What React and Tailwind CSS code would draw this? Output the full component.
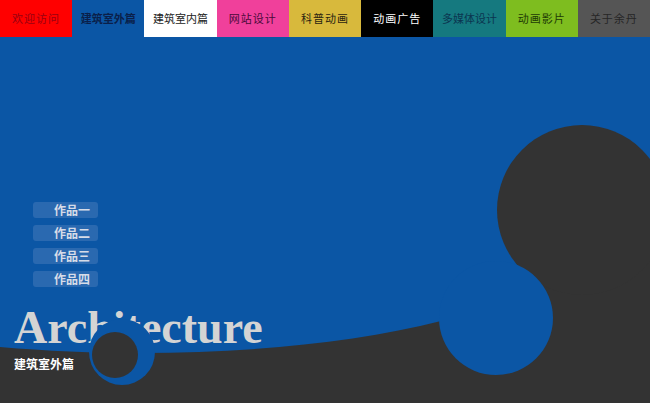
import React from 'react';

const navItems = [
  { label: '欢迎访问', className: 'bg-[#ff0000] text-[#9a0010] tracking-[1px]' },
  { label: '建筑室外篇', className: 'bg-[#0b56a5] text-[#0a1f4a] font-bold' },
  { label: '建筑室内篇', className: 'bg-white text-[#222222]' },
  { label: '网站设计', className: 'bg-[#f0409b] text-[#4a0a3a] tracking-[1px]' },
  { label: '科普动画', className: 'bg-[#d8b93c] text-[#2a2410] tracking-[1px]' },
  { label: '动画广告', className: 'bg-black text-white tracking-[1px]' },
  { label: '多媒体设计', className: 'bg-[#15797f] text-[#0b3550]' },
  { label: '动画影片', className: 'bg-[#7ebd1f] text-[#1d3a05] tracking-[1px]' },
  { label: '关于余丹', className: 'bg-[#555555] text-[#262626] tracking-[1px]' },
];

const works = ['作品一', '作品二', '作品三', '作品四'];

// backdrop: the grey blob on the right and the wave along the bottom
const Backdrop = () => (
  <svg className="absolute inset-0" width="650" height="366" viewBox="0 37 650 366">
    <path
      d="M0,347 C150,360 320,352 441,321 L496,318 L582,210 L650,210 L650,403 L0,403 Z"
      fill="#333333"
    />
    <circle cx="582" cy="210" r="85" fill="#333333" />
    <circle cx="496" cy="318" r="57" fill="#0b56a5" />
  </svg>
);

// small ring sitting on top of the title
const Ring = () => (
  <svg className="absolute left-[89px] top-[282px]" width="66" height="66" viewBox="89 319 66 66">
    <circle cx="122" cy="352" r="33" fill="#0b56a5" />
    <circle cx="115" cy="355" r="23" fill="#333333" />
  </svg>
);

export default function App() {
  return (
    <div className="w-[650px] h-[403px] overflow-hidden bg-[#0b56a5] font-['Noto_Sans_CJK_SC',sans-serif]">
      <nav className="grid grid-cols-9 h-[37px] relative z-10">
        {navItems.map((item) => (
          <div key={item.label} className={`flex items-center justify-center text-[11px] ${item.className}`}>
            {item.label}
          </div>
        ))}
      </nav>

      <main className="relative h-[366px]">
        <Backdrop />

        <div className="relative flex flex-col">
          <ul className="flex flex-col gap-[7px] pl-[33px] pt-[165px]">
            {works.map((w) => (
              <li
                key={w}
                className="w-[65px] h-4 rounded-[3px] bg-[#2a69b0] pl-[21px] flex items-center text-[12px] font-bold leading-none text-[#d6dce8]"
              >
                {w}
              </li>
            ))}
          </ul>

          <h1 className="mt-[18px] pl-[14px] font-['Liberation_Serif',serif] font-bold text-[46px] leading-[45px] text-[#d4d4d4]">
            Architecture
          </h1>
          <p className="mt-[6px] pl-[14px] text-[12px] font-bold leading-4 text-white">建筑室外篇</p>
        </div>

        <Ring />
      </main>
    </div>
  );
}
